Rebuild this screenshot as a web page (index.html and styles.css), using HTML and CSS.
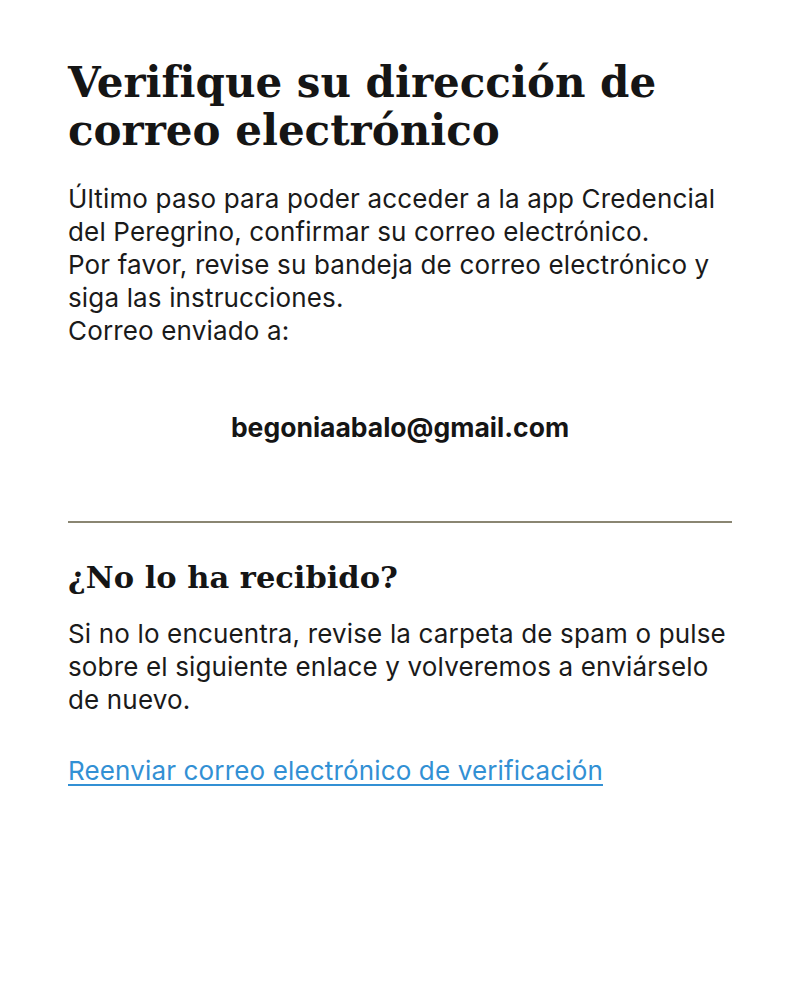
FILE: index.html
```html
<!DOCTYPE html>
<html lang="es">
<head>
<meta charset="utf-8">
<link rel="stylesheet" href="styles.css">
</head>
<body>
<main class="page">
  <h1 class="title">Verifique su dirección de correo electrónico</h1>
  <p class="text">Último paso para poder acceder a la app Credencial del Peregrino, confirmar su correo electrónico.<br>Por favor, revise su bandeja de correo electrónico y siga las instrucciones.<br>Correo enviado a:</p>
  <p class="email">begoniaabalo@gmail.com</p>
  <hr class="divider">
  <h2 class="subtitle">¿No lo ha recibido?</h2>
  <p class="text">Si no lo encuentra, revise la carpeta de spam o pulse sobre el siguiente enlace y volveremos a enviárselo de nuevo.</p>
  <a class="link" href="#">Reenviar correo electrónico de verificación</a>
</main>
</body>
</html>
```
FILE: styles.css
```css
html, body {
  margin: 0;
  padding: 0;
  background: #ffffff;
}
.page {
  padding: 59px 68px 0 68px;
  color: #1a1a1a;
}
.title {
  font-family: "DejaVu Serif", serif;
  font-weight: bold;
  font-size: 42px;
  line-height: 48px;
  margin: 0 0 27px 0;
  color: #151515;
}
.text {
  font-family: Inter, Roboto, sans-serif;
  font-size: 26px;
  letter-spacing: 0.15px;
  line-height: 33px;
  margin: 0;
  color: #1a1a1a;
}
.email {
  font-family: Inter, Roboto, sans-serif;
  font-weight: bold;
  font-size: 26.5px;
  text-align: center;
  margin: 65px 0 0 0;
  line-height: 30px;
  color: #151515;
}
.divider {
  border: 0;
  height: 2px;
  background: #8a8672;
  margin: 79px 0 0 0;
}
.subtitle {
  font-family: "DejaVu Serif", serif;
  font-weight: bold;
  font-size: 30.5px;
  line-height: 40px;
  margin: 34px 0 20px 0;
  color: #151515;
}
.link {
  display: inline-block;
  margin-top: 39px;
  font-family: Inter, Roboto, sans-serif;
  font-size: 26px;
  letter-spacing: 0.15px;
  line-height: 32px;
  color: #3290d4;
  text-decoration: underline;
  text-decoration-thickness: 2px;
  text-underline-offset: 4px;
}
```
